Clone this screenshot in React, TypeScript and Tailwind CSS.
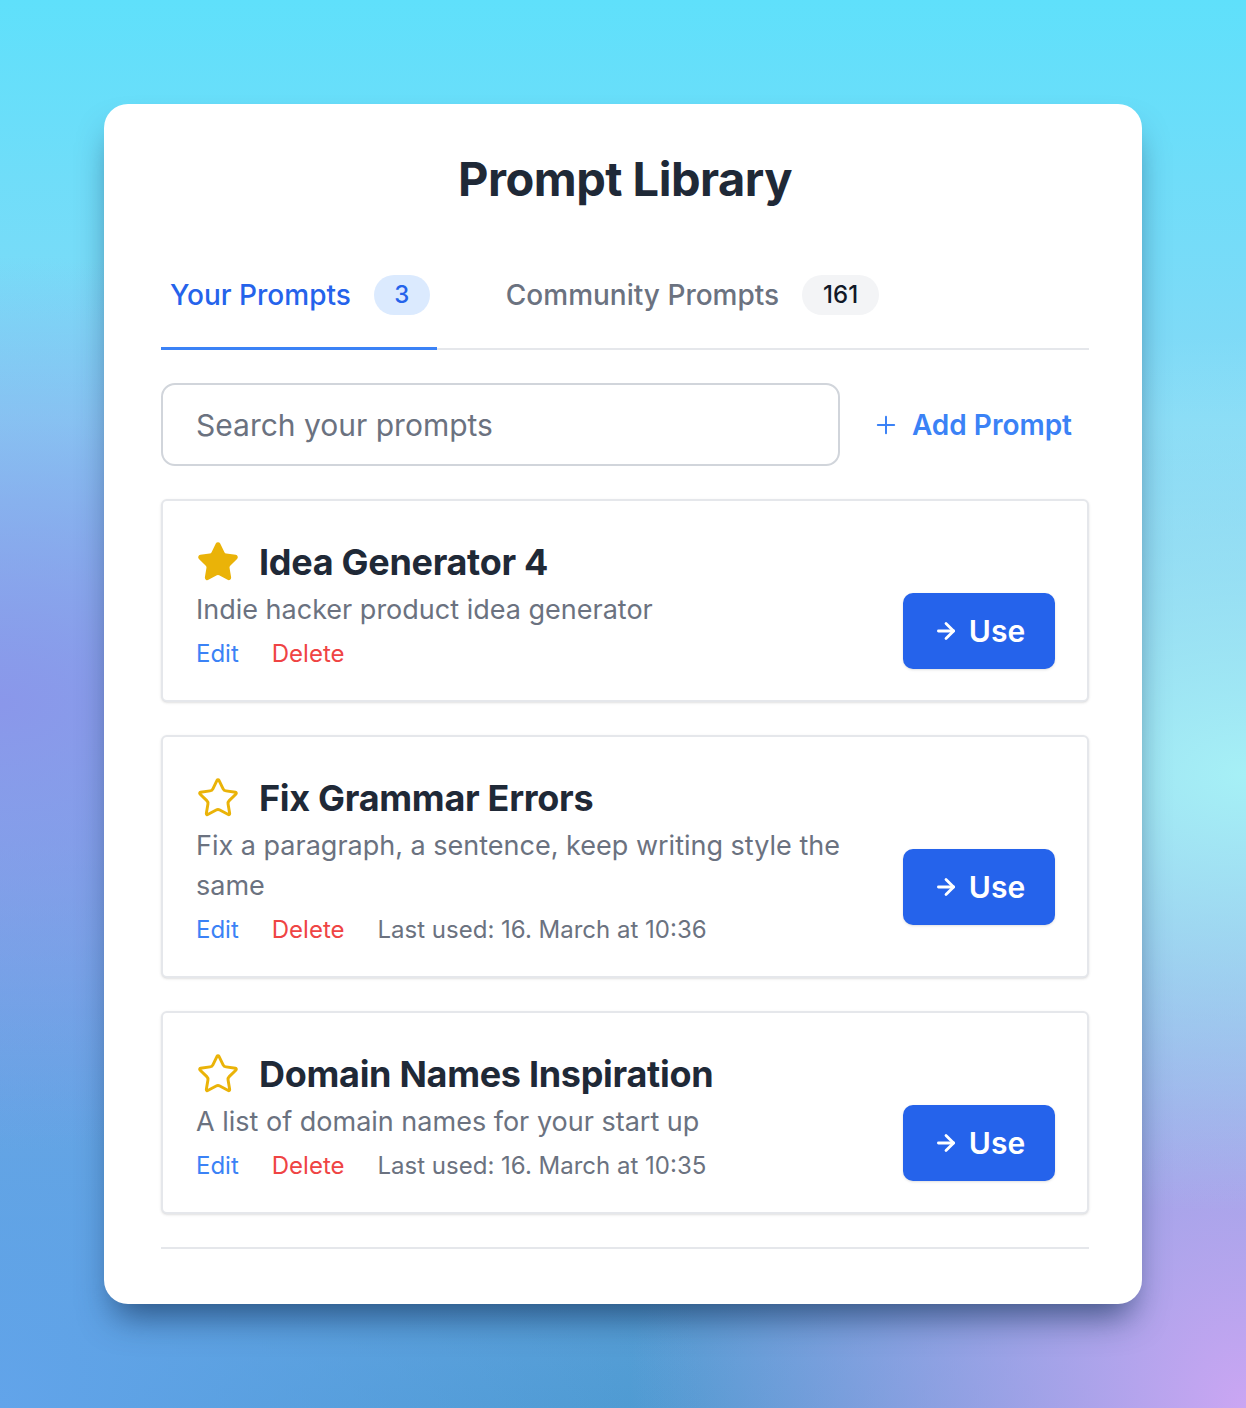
import React, { useState } from 'react';
import { Star, Plus, ArrowRight } from 'lucide-react';

interface Prompt {
  id: number;
  title: string;
  description: string;
  favorite: boolean;
  lastUsed?: string;
}

const prompts: Prompt[] = [
  { id: 1, title: 'Idea Generator 4', description: 'Indie hacker product idea generator', favorite: true },
  {
    id: 2,
    title: 'Fix Grammar Errors',
    description: 'Fix a paragraph, a sentence, keep writing style the same',
    favorite: false,
    lastUsed: '16. March at 10:36',
  },
  {
    id: 3,
    title: 'Domain Names Inspiration',
    description: 'A list of domain names for your start up',
    favorite: false,
    lastUsed: '16. March at 10:35',
  },
];

const PromptCard: React.FC<{ prompt: Prompt }> = ({ prompt }) => (
  <div className="rounded-md border-2 border-[#e5e7eb] bg-white pl-[33px] pr-[32px] pt-[39px] pb-[28px] shadow-sm">
    <div className="flex items-center gap-[19px]">
      <Star
        className="h-[44px] w-[44px] text-[#eab308]"
        strokeWidth={1.6}
        fill={prompt.favorite ? '#eab308' : 'none'}
      />
      <h3 className="text-[36px] font-bold leading-[44px] text-[#1f2937] tracking-[-0.3px]">{prompt.title}</h3>
    </div>
    <div className="mt-[6px] flex items-center gap-12">
      <div className="flex-1">
        <p className="text-[27px] leading-[40px] text-[#6b7280]">{prompt.description}</p>
        <div className="mt-[6px] flex items-center gap-[33px] text-[24px] leading-[36px]">
          <button className="text-[#3b82f6]">Edit</button>
          <button className="text-[#ef4444]">Delete</button>
          {prompt.lastUsed && <span className="text-[#6b7280]">Last used: {prompt.lastUsed}</span>}
        </div>
      </div>
      <button className="flex h-[76px] w-[152px] items-center justify-center gap-[10px] rounded-[10px] bg-[#2563eb] text-[30px] font-semibold text-white shadow-sm">
        <ArrowRight className="h-[26px] w-[26px]" strokeWidth={2.6} />
        Use
      </button>
    </div>
  </div>
);

export default function App() {
  const [tab, setTab] = useState<'yours' | 'community'>('yours');

  return (
    <div
      className="flex min-h-[1408px] w-full items-start justify-center pt-[104px] font-['Inter',sans-serif] bg-[radial-gradient(ellipse_at_0%_50%,#8a97ea_0%,rgba(138,151,234,0)_45%),radial-gradient(ellipse_at_100%_55%,#a6f0f6_0%,rgba(166,240,246,0)_40%),radial-gradient(ellipse_at_100%_100%,#cba6f3_0%,rgba(203,166,243,0)_35%),radial-gradient(ellipse_at_0%_100%,#62a4ea_0%,rgba(98,164,234,0)_40%),linear-gradient(180deg,#5fe0fb_0%,#86d9f6_30%,#7fb0e6_60%,#4d9ad0_100%)]"
    >
      <div className="w-[1038px] rounded-3xl bg-white pl-[57px] pr-[53px] pt-[47px] pb-[55px] shadow-[0_22px_34px_-10px_rgba(20,50,90,0.7)]">
        <h1 className="text-center text-[47px] font-bold leading-[56px] tracking-[-0.5px] text-[#1f2937]">Prompt Library</h1>

        <div className="mt-[68px] flex items-end gap-[60px] border-b-2 border-[#e5e7eb]">
          <button
            onClick={() => setTab('yours')}
            className={`-mb-[2px] flex items-center gap-[23px] pl-[9px] pr-[7px] pb-[32px] border-b-[3px] ${
              tab === 'yours' ? 'border-[#3b82f6]' : 'border-transparent'
            }`}
          >
            <span className={`text-[28px] font-medium leading-[40px] ${tab === 'yours' ? 'text-[#2563eb]' : 'text-[#6b7280]'}`}>
              Your Prompts
            </span>
            <span className="flex h-[40px] w-[56px] items-center justify-center rounded-full bg-[#dbeafe] text-[24px] font-medium text-[#2563eb]">
              3
            </span>
          </button>
          <button
            onClick={() => setTab('community')}
            className={`-mb-[2px] flex items-center gap-[23px] pl-[9px] pr-[7px] pb-[32px] border-b-[3px] ${
              tab === 'community' ? 'border-[#3b82f6]' : 'border-transparent'
            }`}
          >
            <span className={`text-[28px] font-medium leading-[40px] ${tab === 'community' ? 'text-[#2563eb]' : 'text-[#6b7280]'}`}>
              Community Prompts
            </span>
            <span className="flex h-[40px] w-[77px] items-center justify-center rounded-full bg-[#f3f4f6] text-[24px] font-medium text-[#111827]">
              161
            </span>
          </button>
        </div>

        <div className="mt-[33px] flex items-center justify-between">
          <input
            type="text"
            placeholder="Search your prompts"
            className="h-[83px] w-[679px] rounded-[14px] border-2 border-[#d1d5db] px-[33px] text-[30px] text-gray-700 placeholder:text-[#6b7280] outline-none"
          />
          <button className="mr-[17px] flex items-center gap-[12px] text-[28px] font-semibold text-[#3b82f6]">
            <Plus className="h-[28px] w-[28px]" strokeWidth={1.7} />
            Add Prompt
          </button>
        </div>

        <div className="mt-[33px] flex flex-col gap-[33px] border-b-2 border-[#e5e7eb] pb-[33px]">
          {prompts.map((p) => (
            <PromptCard key={p.id} prompt={p} />
          ))}
        </div>
      </div>
    </div>
  );
}
